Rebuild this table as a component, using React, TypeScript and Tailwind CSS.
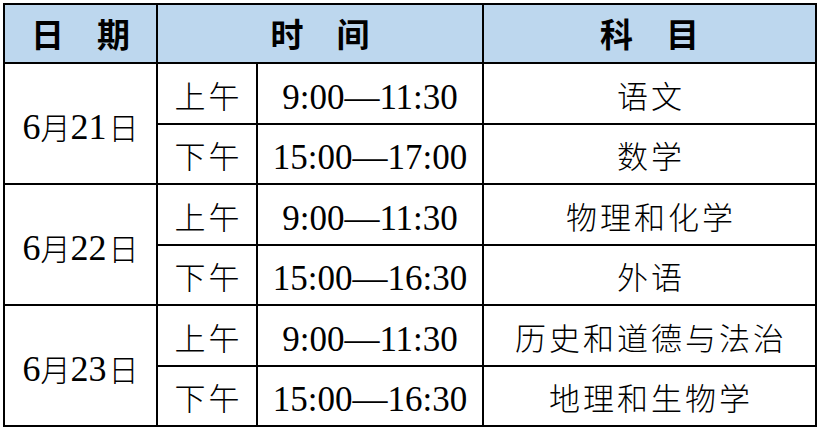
import React from "react";

const cjk = { fontFamily: '"Noto Sans CJK SC", sans-serif' };
const serif = { fontFamily: '"Liberation Serif", "Noto Sans CJK SC", serif' };

function Cell({ children, className = "" }: { children?: React.ReactNode; className?: string }) {
  return (
    <div className={`bg-white flex items-center justify-center text-black ${className}`}>{children}</div>
  );
}

function Head({ children, className = "" }: { children: React.ReactNode; className?: string }) {
  return (
    <div
      className={`bg-[#bdd7ee] flex items-center justify-center text-black font-bold text-[33px] leading-none ${className}`}
      style={cjk}
    >
      {children}
    </div>
  );
}

function Cn({ children }: { children: React.ReactNode }) {
  return (
    <span className="text-[31px] font-light tracking-[3px] leading-none mr-[-3px] mt-[2px]" style={cjk}>
      {children}
    </span>
  );
}

function Time({ children }: { children: React.ReactNode }) {
  return (
    <span className="text-[35px] leading-none mt-[8px]" style={serif}>
      {children}
    </span>
  );
}

function DateText({ d }: { d: string }) {
  return (
    <span className="flex items-baseline leading-none mt-[6px]" style={serif}>
      <span className="text-[36px]">6</span>
      <span className="text-[30px] font-light" style={cjk}>月</span>
      <span className="text-[36px]">{d}</span>
      <span className="text-[30px] font-light ml-[2px]" style={cjk}>日</span>
    </span>
  );
}

const days = [
  { d: "21", rows: [["上午", "9:00—11:30", "语文"], ["下午", "15:00—17:00", "数学"]] },
  { d: "22", rows: [["上午", "9:00—11:30", "物理和化学"], ["下午", "15:00—16:30", "外语"]] },
  { d: "23", rows: [["上午", "9:00—11:30", "历史和道德与法治"], ["下午", "15:00—16:30", "地理和生物学"]] },
];

export default function App() {
  return (
    <div className="w-[820px] h-[431px] bg-white pl-[3px] pt-[3px]">
      <div className="w-[814px] bg-black p-[2px] grid gap-[2px] grid-cols-[151px_98px_224px_331px] grid-rows-[57px_repeat(6,58.5px)]">
        <Head>日　期</Head>
        <Head className="col-span-2">时　间</Head>
        <Head>科　目</Head>
        {days.map((day) => (
          <React.Fragment key={day.d}>
            <Cell className="row-span-2">
              <DateText d={day.d} />
            </Cell>
            {day.rows.map((r, i) => (
              <React.Fragment key={i}>
                <Cell>
                  <Cn>{r[0]}</Cn>
                </Cell>
                <Cell>
                  <Time>{r[1]}</Time>
                </Cell>
                <Cell>
                  <Cn>{r[2]}</Cn>
                </Cell>
              </React.Fragment>
            ))}
          </React.Fragment>
        ))}
      </div>
    </div>
  );
}
